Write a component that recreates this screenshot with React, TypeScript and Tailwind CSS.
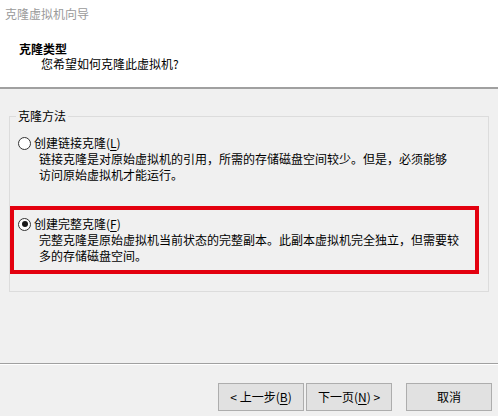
const Radio = ({ checked }: { checked?: boolean }) => (
  <span className="w-[13px] h-[13px] rounded-full border border-[#333333] bg-white flex items-center justify-center shrink-0">
    {checked && <span className="w-[6px] h-[6px] rounded-full bg-[#1a1a1a]" />}
  </span>
);

const Key = ({ k }: { k: string }) => (
  <>
    (<span className="underline underline-offset-2">{k}</span>)
  </>
);

const Button = ({ children }: { children: React.ReactNode }) => (
  <button className="w-[86px] h-[28px] bg-[#e1e1e1] border border-[#adadad] text-[12px] leading-[16px] text-black flex items-center justify-center">
    {children}
  </button>
);

export default function App() {
  return (
    <div
      className="w-[498px] h-[416px] bg-[#f0f0f0] flex flex-col text-[12px] leading-[16px] text-black"
      style={{ fontFamily: '"Noto Sans CJK SC", "Liberation Sans", sans-serif' }}
    >
      {/* header */}
      <div className="bg-white h-[89px] border-b-2 border-[#a0a0a0] flex flex-col">
        <div className="pl-[5px] pt-[6px] text-[#9a9a9a]">克隆虚拟机向导</div>
        <div className="pl-[19px] mt-[19px] font-bold">克隆类型</div>
        <div className="pl-[41px] -mt-[1px]">您希望如何克隆此虚拟机?</div>
      </div>

      {/* body */}
      <div className="px-[9px] pt-[27px]">
        <div className="h-[176px] border border-[#dcdcdc] flex flex-col">
          <span className="self-start ml-[6px] px-[2px] -mt-[9px] bg-[#f0f0f0]">克隆方法</span>

          <div className="mt-[11px] pl-[8px] flex items-center gap-[3px]">
            <Radio />
            <span>
              创建链接克隆<Key k="L" />
            </span>
          </div>
          <div className="pl-[29px]">
            链接克隆是对原始虚拟机的引用，所需的存储磁盘空间较少。但是，必须能够
            <br />
            访问原始虚拟机才能运行。
          </div>

          <div className="mt-[23px] w-[469px] border-4 border-[#e3000f] pt-[6px] pb-[6px] pl-[4px]">
            <div className="flex items-center gap-[3px]">
              <Radio checked />
              <span>
                创建完整克隆<Key k="F" />
              </span>
            </div>
            <div className="pl-[21px]">
              完整克隆是原始虚拟机当前状态的完整副本。此副本虚拟机完全独立，但需要较
              <br />
              多的存储磁盘空间。
            </div>
          </div>
        </div>
      </div>

      {/* footer */}
      <div className="mt-auto">
        <div className="h-[1px] bg-[#a0a0a0]" />
        <div className="h-[1px] bg-white" />
        <div className="pt-[18px] pb-[5px] pr-[6px] flex justify-end">
          <Button>
            &lt; 上一步<Key k="B" />
          </Button>
          <div className="ml-[2px]">
            <Button>
              下一页<Key k="N" /> &gt;
            </Button>
          </div>
          <div className="ml-[14px]">
            <Button>取消</Button>
          </div>
        </div>
      </div>
    </div>
  );
}
